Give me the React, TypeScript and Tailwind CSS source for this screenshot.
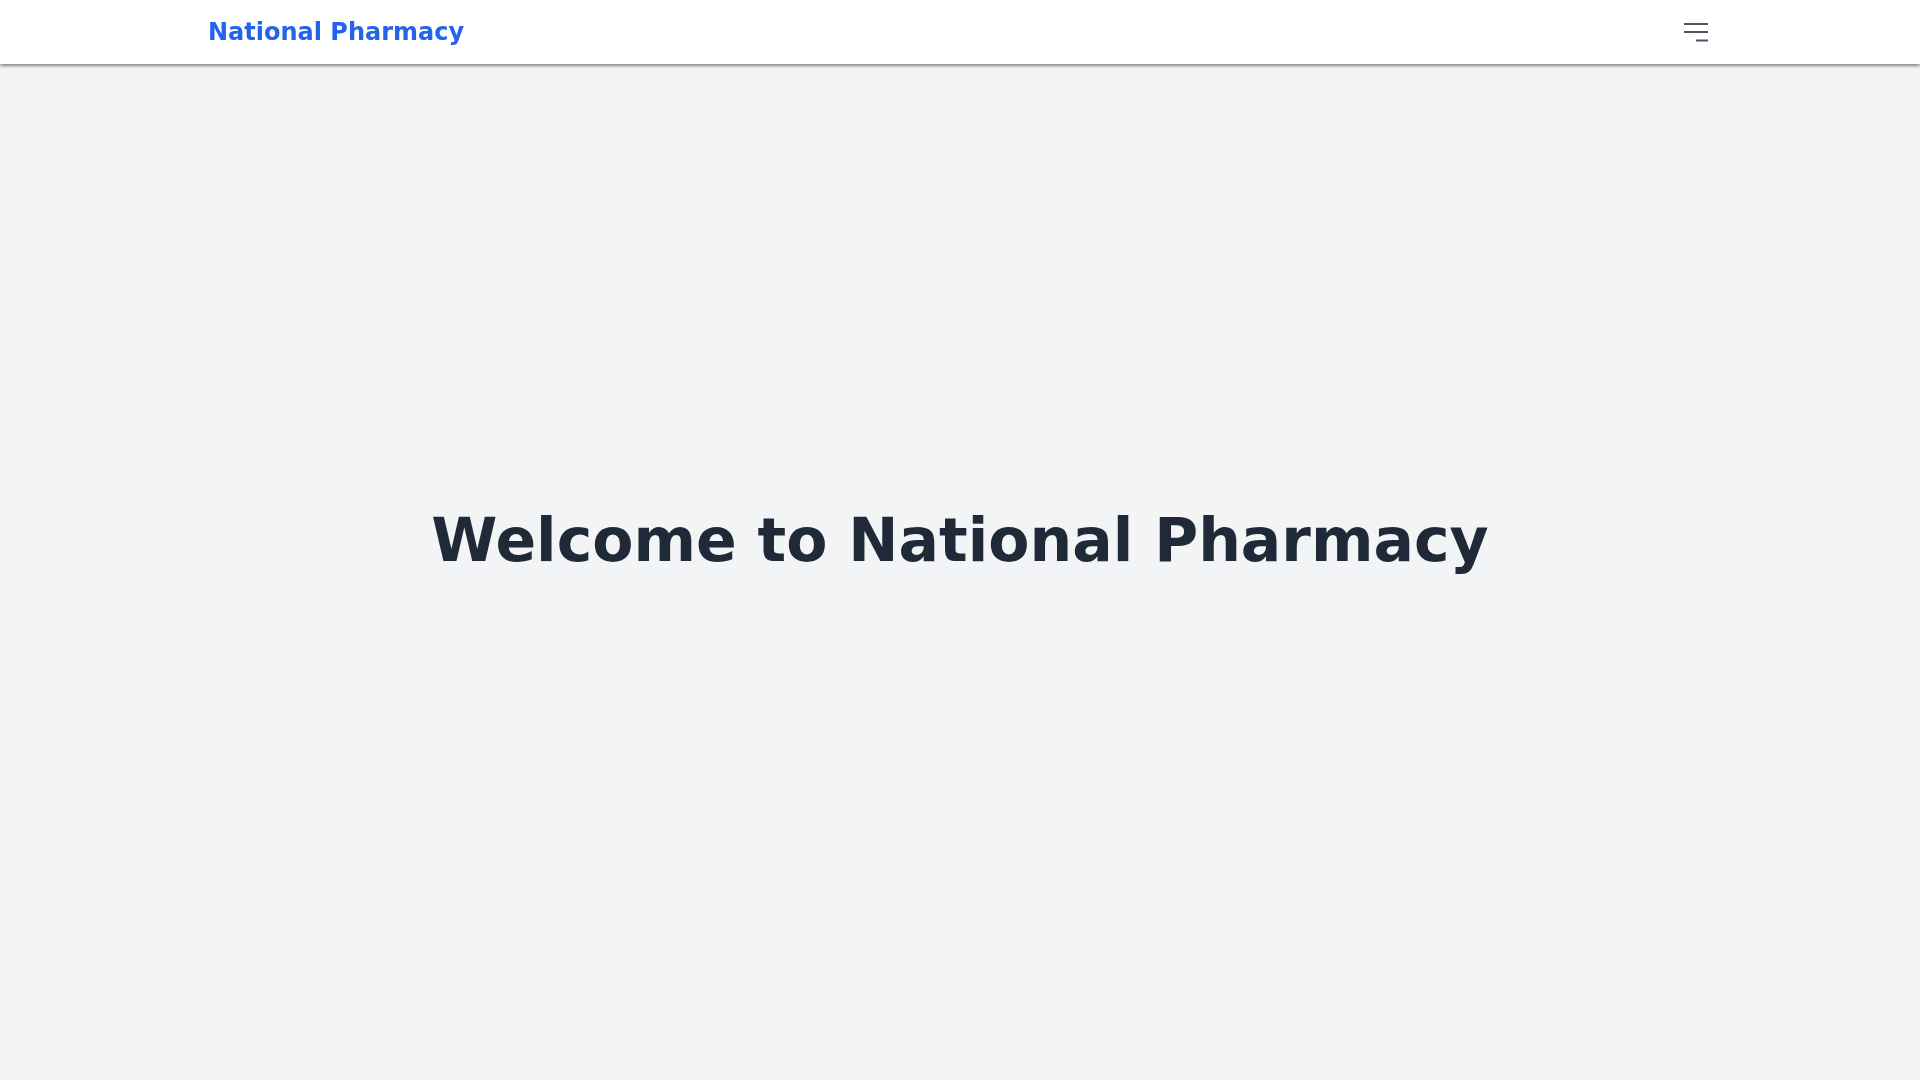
const font = { fontFamily: '"DejaVu Sans", sans-serif' }

export const Navbar = () => {
  return (
    <nav className="fixed top-0 left-0 right-0 z-10 bg-white shadow-[0_2px_3px_rgba(0,0,0,0.45)]">
      <div className="container mx-auto px-4 h-16 flex items-center justify-between">
        <a href="#" className="text-2xl font-bold text-[#2563eb]">National Pharmacy</a>
        <button type="button" className="p-1 text-[#4b5563]">
          <svg width="24" height="24" viewBox="0 0 24 24" fill="currentColor" aria-hidden="true">
            <rect x="0" y="3" width="24" height="2" />
            <rect x="0" y="11" width="24" height="2" />
            <rect x="12" y="19.5" width="12" height="2" />
          </svg>
        </button>
      </div>
    </nav>
  )
}

export default function App() {
  return (
    <div className="min-h-screen bg-[#f3f4f6]" style={font}>
      <Navbar />
      <main className="min-h-screen flex items-center justify-center">
        <h1 className="text-6xl font-bold text-[#1f2937]">Welcome to National Pharmacy</h1>
      </main>
    </div>
  )
}
